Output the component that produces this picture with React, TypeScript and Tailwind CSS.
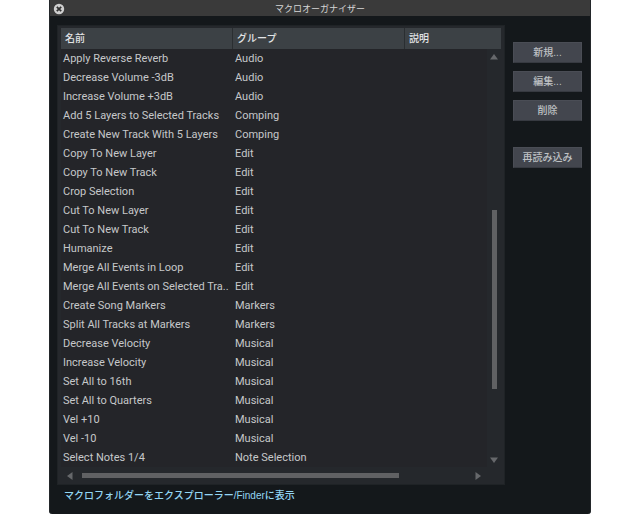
import React from "react";

const macros: [string, string][] = [
  ["Apply Reverse Reverb", "Audio"],
  ["Decrease Volume -3dB", "Audio"],
  ["Increase Volume +3dB", "Audio"],
  ["Add 5 Layers to Selected Tracks", "Comping"],
  ["Create New Track With 5 Layers", "Comping"],
  ["Copy To New Layer", "Edit"],
  ["Copy To New Track", "Edit"],
  ["Crop Selection", "Edit"],
  ["Cut To New Layer", "Edit"],
  ["Cut To New Track", "Edit"],
  ["Humanize", "Edit"],
  ["Merge All Events in Loop", "Edit"],
  ["Merge All Events on Selected Tra..", "Edit"],
  ["Create Song Markers", "Markers"],
  ["Split All Tracks at Markers", "Markers"],
  ["Decrease Velocity", "Musical"],
  ["Increase Velocity", "Musical"],
  ["Set All to 16th", "Musical"],
  ["Set All to Quarters", "Musical"],
  ["Vel +10", "Musical"],
  ["Vel -10", "Musical"],
  ["Select Notes 1/4", "Note Selection"],
];

function Arrow({ points, label, className = "" }: { points: string; label: string; className?: string }) {
  return (
    <button type="button" aria-label={label} className={`flex shrink-0 items-center justify-center ${className}`}>
      <svg width="8" height="8" viewBox="0 0 8 8" fill="#66686b">
        <polygon points={points} />
      </svg>
    </button>
  );
}

function ActionButton({ children }: { children: React.ReactNode }) {
  return (
    <button
      type="button"
      className="h-[21px] w-full border border-[#4a4d55] border-b-[#373a41] bg-[#43464e] text-[10px] leading-none font-medium text-[#bfc1c4]"
    >
      {children}
    </button>
  );
}

export default function App() {
  return (
    <div className="bg-white px-[49px] font-['Liberation_Sans','Noto_Sans_CJK_JP',sans-serif]">
      <main className="overflow-hidden rounded-b-[3px] border-x border-[#23272a] bg-[#14181b]">
        <header className="grid h-4 grid-cols-[16px_1fr_16px] items-center bg-[#3a3a3a]">
          <button type="button" aria-label="閉じる" className="flex justify-end">
            <svg width="12" height="12" viewBox="0 0 12 12" className="mr-px">
              <circle cx="6" cy="6" r="5.2" fill="#cfcfcf" />
              <path d="M3.8 3.8l4.4 4.4M8.2 3.8l-4.4 4.4" stroke="#303030" strokeWidth="1.7" />
            </svg>
          </button>
          <h1 className="pt-px text-center text-[9px] leading-4 text-[#d6d6d6]">マクロオーガナイザー</h1>
        </header>

        <div className="flex gap-2 pt-[9px] pr-2 pl-[7px]">
          <section className="min-w-0 flex-1 border border-[#1f2326] bg-[#25282c] px-[3px] pt-[2px]">
            <div className="grid grid-cols-[minmax(0,1fr)_14px]">
              <div className="col-start-1 row-start-1 mt-[21px] bg-[#242529]" />
              <table className="col-span-2 col-start-1 row-start-1 w-full table-fixed border-separate border-spacing-0 text-left">
                <colgroup>
                  <col className="w-[172px]" />
                  <col className="w-[172px]" />
                  <col />
                </colgroup>
                <thead>
                  <tr className="h-[21px] bg-[#3c4145] text-[10px] leading-none text-[#e2e4e6]">
                    <th className="border-r border-[#2a2e31] p-0 pl-1 font-medium">名前</th>
                    <th className="border-r border-[#2a2e31] p-0 pl-1 font-medium">グループ</th>
                    <th className="p-0 pl-1 font-medium">説明</th>
                  </tr>
                </thead>
                <tbody className="font-[Roboto,'Liberation_Sans',sans-serif] text-[11px] leading-[19px] text-[#c6c8ca]">
                  {macros.map(([name, group]) => (
                    <tr key={name} className="h-[19px]">
                      <td className="overflow-hidden p-0 pl-[2px] whitespace-nowrap">{name}</td>
                      <td className="p-0 pl-[2px] whitespace-nowrap">{group}</td>
                      <td className="p-0" />
                    </tr>
                  ))}
                </tbody>
              </table>
              <div className="col-start-2 row-start-1 mt-[21px] flex flex-col items-center">
                <Arrow label="上へ" points="0,6.5 4,1 8,6.5" className="h-4 w-full" />
                <div className="w-[5px] flex-[145]" />
                <div className="w-[5px] flex-[179] bg-[#606163]" />
                <div className="w-[5px] flex-[64]" />
                <Arrow label="下へ" points="0,1.5 8,1.5 4,7" className="h-[14px] w-full" />
              </div>
            </div>
            <div className="mr-[14px] flex h-[17px] items-center">
              <Arrow label="左へ" points="6.5,0 1,4 6.5,8" className="h-full w-[18px]" />
              <div className="ml-[3px] h-[5px] flex-[317] bg-[#606163]" />
              <div className="flex-[70]" />
              <Arrow label="右へ" points="1.5,0 7,4 1.5,8" className="h-full w-[18px]" />
            </div>
          </section>

          <aside className="flex w-[69px] shrink-0 flex-col gap-2 pt-[17px]">
            <ActionButton>新規...</ActionButton>
            <ActionButton>編集...</ActionButton>
            <ActionButton>削除</ActionButton>
            <div className="flex pt-[18px]">
              <ActionButton>再読み込み</ActionButton>
            </div>
          </aside>
        </div>

        <footer className="flex h-[29px] items-start pl-[14px]">
          <a href="#folder" className="text-[10px] leading-[22px] font-medium text-[#93d5f3]">
            マクロフォルダーをエクスプローラー/Finderに表示
          </a>
        </footer>
      </main>
    </div>
  );
}
